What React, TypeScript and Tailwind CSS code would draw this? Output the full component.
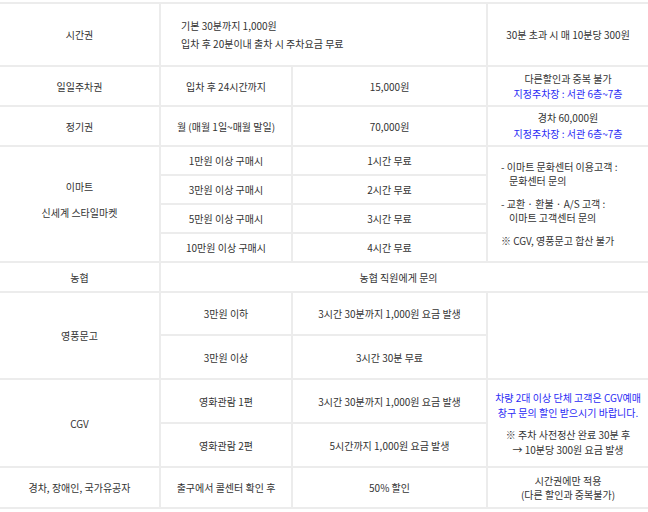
import React from "react";

const B = "border-2 border-[#ececec]";
const td = `${B} p-0 text-center align-middle`;

export default function App() {
  return (
    <div
      className="w-[648px] h-[512px] bg-white overflow-hidden pt-[2px] text-[10px] text-[#333]"
      style={{ fontFamily: '"Noto Sans CJK KR", "Noto Sans", sans-serif' }}
    >
      <table className="w-[648px] table-fixed border-collapse border-x-0">
        <colgroup>
          <col className="w-[160px]" />
          <col className="w-[132px]" />
          <col className="w-[195px]" />
          <col className="w-[161px]" />
        </colgroup>
        <tbody>
          <tr className="h-[63px]">
            <td className={`${td} border-l-0`}>시간권</td>
            <td className={`${B} p-0 align-middle text-left pl-[20px] leading-[18px]`} colSpan={2}>
              <div>기본 30분까지 1,000원</div>
              <div>입차 후 20분이내 출차 시 주차요금 무료</div>
            </td>
            <td className={`${td} border-r-0`}>30분 초과 시 매 10분당 300원</td>
          </tr>
          <tr className="h-[40px]">
            <td className={`${td} border-l-0`}>일일주차권</td>
            <td className={td}>입차 후 24시간까지</td>
            <td className={td}>15,000원</td>
            <td className={`${td} border-r-0 leading-[15px]`}>
              <div>다른할인과 중복 불가</div>
              <div className="text-[#2b2bf5]">지정주차장 : 서관 6층~7층</div>
            </td>
          </tr>
          <tr className="h-[40px]">
            <td className={`${td} border-l-0`}>정기권</td>
            <td className={td}>월 (매월 1일~매월 말일)</td>
            <td className={td}>70,000원</td>
            <td className={`${td} border-r-0 leading-[16px]`}>
              <div>경차 60,000원</div>
              <div className="text-[#2b2bf5]">지정주차장 : 서관 6층~7층</div>
            </td>
          </tr>
          <tr className="h-[29px]">
            <td className={`${td} border-l-0 leading-[26px]`} rowSpan={4}>
              <div className="pb-[8px]">
                <div>이마트</div>
                <div>신세계 스타일마켓</div>
              </div>
            </td>
            <td className={td}>1만원 이상 구매시</td>
            <td className={td}>1시간 무료</td>
            <td className={`${B} border-r-0 p-0 pl-[13px] text-left align-middle`} rowSpan={4}>
              <div className="flex flex-col gap-[9px] leading-[14px]">
                <div>
                  <div>- 이마트 문화센터 이용고객 :</div>
                  <div className="pl-[8px]">문화센터 문의</div>
                </div>
                <div>
                  <div>- 교환 · 환불 · A/S 고객 :</div>
                  <div className="pl-[8px]">이마트 고객센터 문의</div>
                </div>
                <div>※ CGV, 영풍문고 합산 불가</div>
              </div>
            </td>
          </tr>
          <tr className="h-[29px]">
            <td className={td}>3만원 이상 구매시</td>
            <td className={td}>2시간 무료</td>
          </tr>
          <tr className="h-[29px]">
            <td className={td}>5만원 이상 구매시</td>
            <td className={td}>3시간 무료</td>
          </tr>
          <tr className="h-[29px]">
            <td className={td}>10만원 이상 구매시</td>
            <td className={td}>4시간 무료</td>
          </tr>
          <tr className="h-[30px]">
            <td className={`${td} border-l-0`}>농협</td>
            <td className={`${td} border-r-0 pr-[12px]`} colSpan={3}>농협 직원에게 문의</td>
          </tr>
          <tr className="h-[43px]">
            <td className={`${td} border-l-0`} rowSpan={2}>영풍문고</td>
            <td className={td}>3만원 이하</td>
            <td className={td}>3시간 30분까지 1,000원 요금 발생</td>
            <td className={`${td} border-r-0`} rowSpan={2}></td>
          </tr>
          <tr className="h-[44px]">
            <td className={td}>3만원 이상</td>
            <td className={td}>3시간 30분 무료</td>
          </tr>
          <tr className="h-[44px]">
            <td className={`${td} border-l-0`} rowSpan={2}>CGV</td>
            <td className={td}>영화관람 1편</td>
            <td className={td}>3시간 30분까지 1,000원 요금 발생</td>
            <td className={`${td} border-r-0 leading-[15px]`} rowSpan={2}>
              <div className="text-[#2b2bf5]">
                <div>차량 2대 이상 단체 고객은 CGV예매</div>
                <div>창구 문의 할인 받으시기 바랍니다.</div>
              </div>
              <div className="mt-[7px]">
                <div>※ 주차 사전정산 완료 30분 후</div>
                <div>→ 10분당 300원 요금 발생</div>
              </div>
            </td>
          </tr>
          <tr className="h-[44px]">
            <td className={td}>영화관람 2편</td>
            <td className={td}>5시간까지 1,000원 요금 발생</td>
          </tr>
          <tr className="h-[41px]">
            <td className={`${td} border-l-0`}>경차, 장애인, 국가유공자</td>
            <td className={td}>출구에서 콜센터 확인 후</td>
            <td className={td}>50% 할인</td>
            <td className={`${td} border-r-0 leading-[14px]`}>
              <div>시간권에만 적용</div>
              <div>(다른 할인과 중복불가)</div>
            </td>
          </tr>
        </tbody>
      </table>
    </div>
  );
}
